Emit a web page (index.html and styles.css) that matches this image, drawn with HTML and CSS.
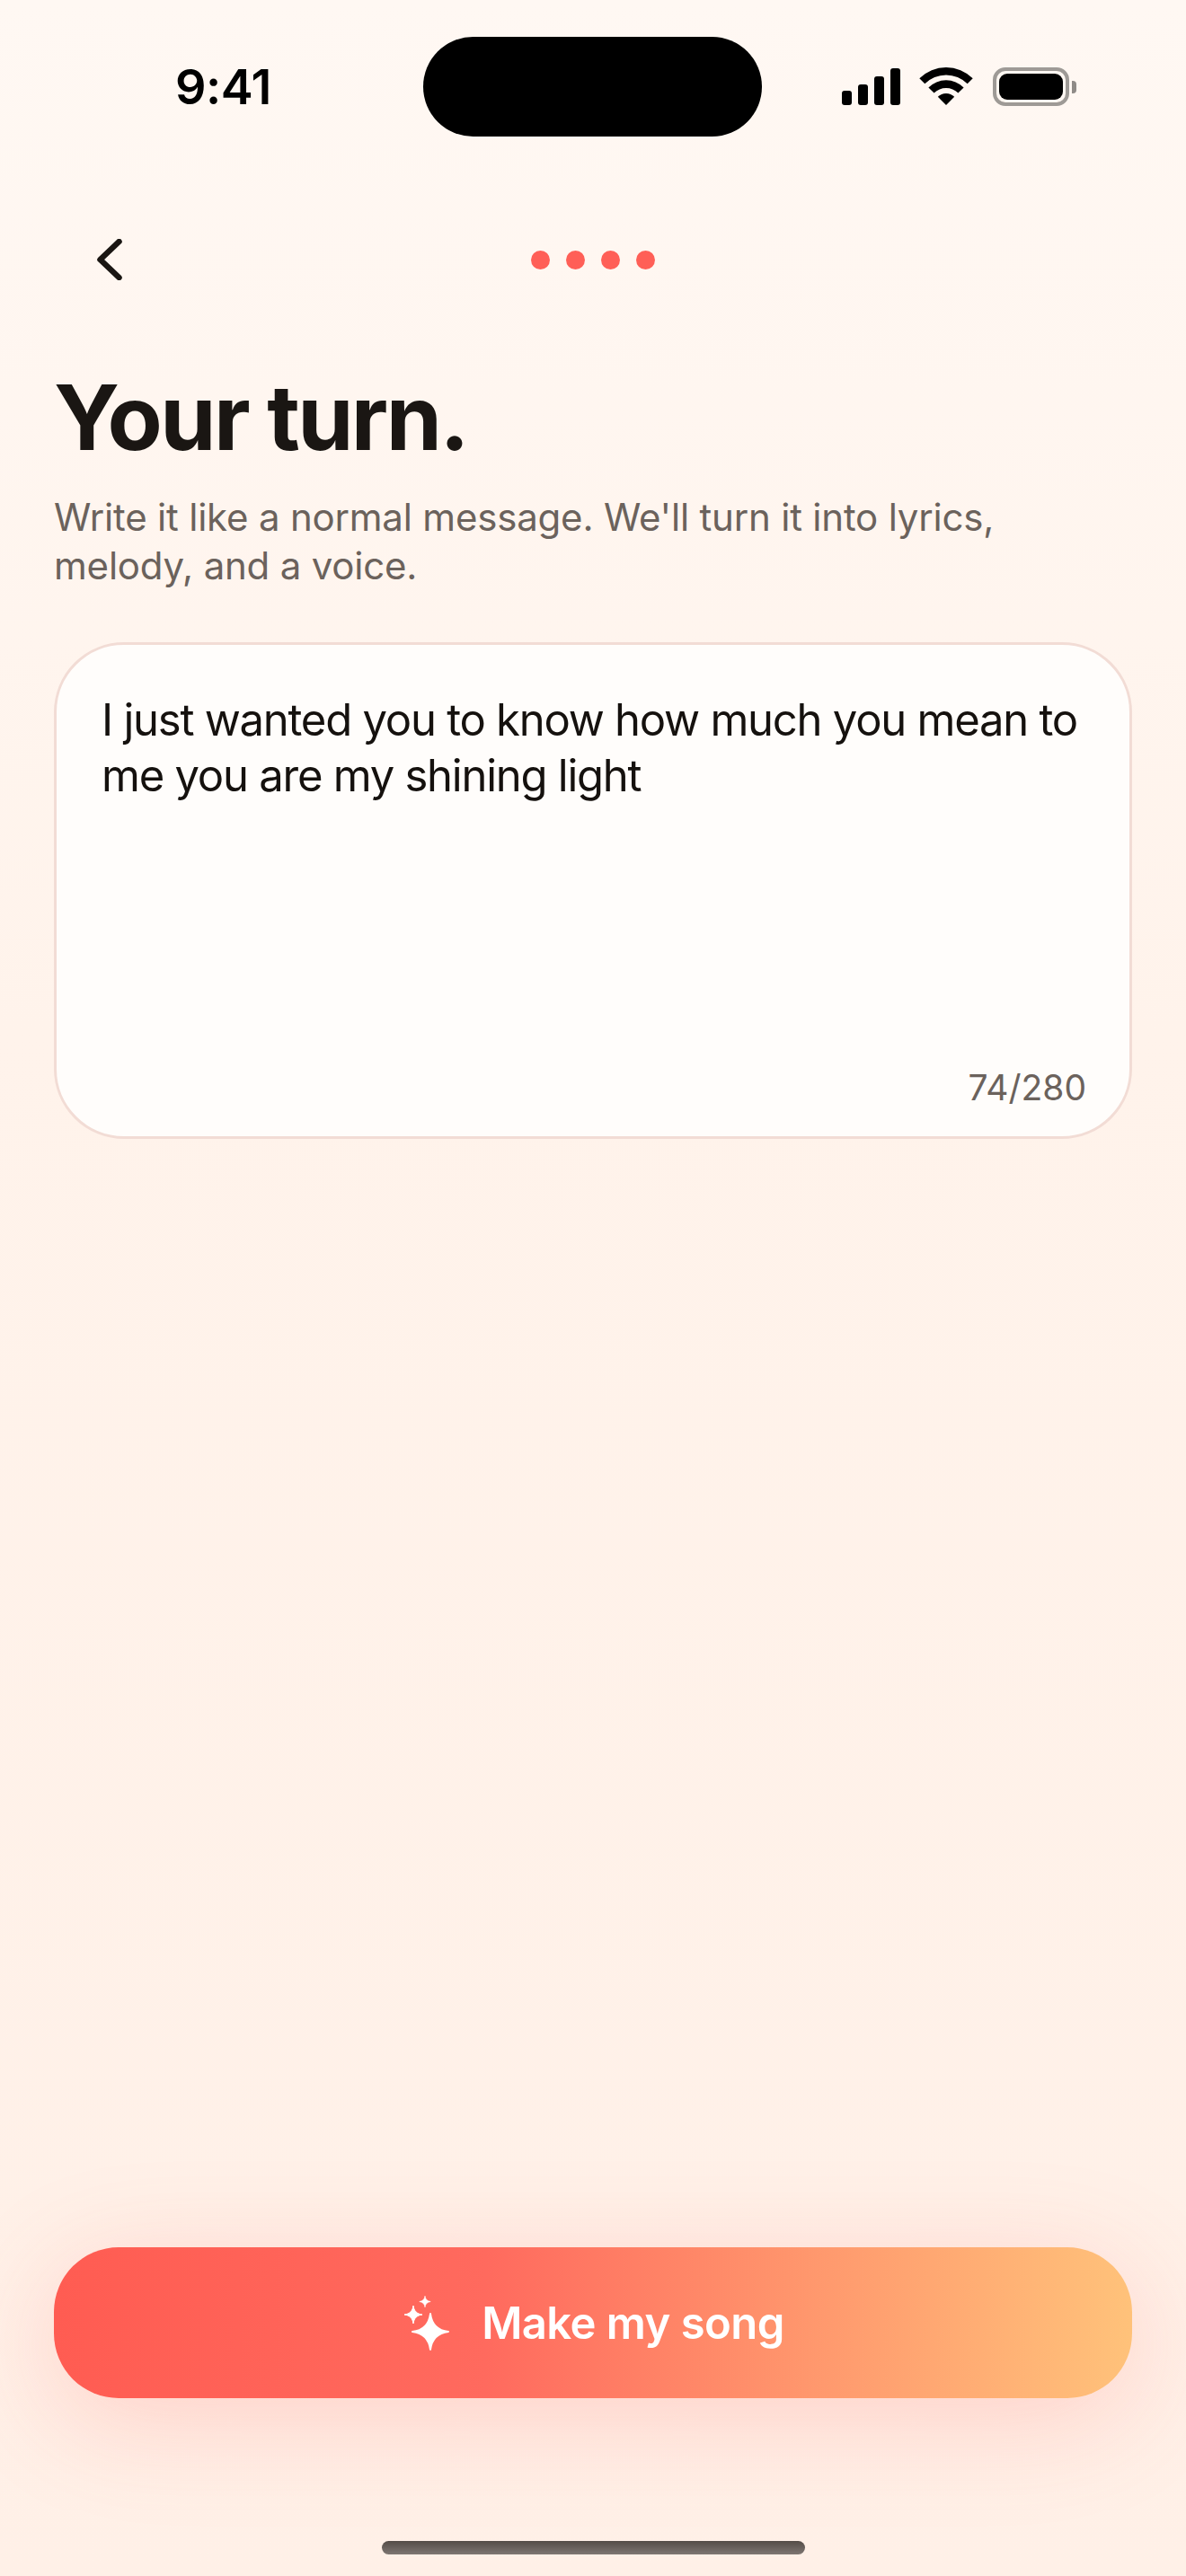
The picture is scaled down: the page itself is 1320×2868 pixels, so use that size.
FILE: index.html
```html
<!DOCTYPE html>
<html lang="en">
<head>
<meta charset="utf-8">
<title>Your turn</title>
<link rel="stylesheet" href="styles.css">
</head>
<body>
<main class="screen">
  <header class="status">
    <span class="time">9:41</span>
    <div class="island"></div>
    <div class="status-icons">
      <svg class="signal" width="65" height="41" viewBox="0 0 65 41"><rect x="0" y="25" width="11" height="16" rx="3"/><rect x="18" y="18" width="11" height="23" rx="3"/><rect x="36" y="9" width="11" height="32" rx="3"/><rect x="54" y="0" width="11" height="41" rx="3"/></svg>
      <svg class="wifi" width="58" height="42" viewBox="0 0 58 42"><path d="M-.7 12.300A42 42 0 0 1 58.700 12.300L52.700 18.300A33.500 33.500 0 0 0 5.300 18.300Z"/><path d="M9.400 22.400A27.700 27.700 0 0 1 48.600 22.400L42.400 28.600A19 19 0 0 0 15.600 28.600Z"/><path d="M19.800 32.800A13 13 0 0 1 38.200 32.800L29 42Z"/></svg>
      <div class="battery"><div class="battery-shell"><div class="battery-fill"></div></div><div class="battery-cap"></div></div>
    </div>
  </header>

  <nav class="topbar">
    <button class="back" aria-label="Back">
      <svg width="28" height="46" viewBox="0 0 28 46" fill="none"><path d="M24.500 3 3.500 23l21 20"/></svg>
    </button>
    <div class="steps"><i></i><i></i><i></i><i></i></div>
  </nav>

  <section class="intro">
    <h1>Your turn.</h1>
    <p>Write it like a normal message. We'll turn it into lyrics, melody, and a voice.</p>
  </section>

  <section class="card">
    <p class="message">I just wanted you to know how much you mean to me you are my shining light</p>
    <span class="count">74/280</span>
  </section>

  <div class="spacer"></div>

  <button class="cta">
    <svg width="50" height="61" viewBox="0 0 50 61"><path d="M0-20C1.500-8 8-1.500 20 0 8 1.500 1.500 8 0 20-1.500 8-8 1.500-20 0-8-1.500-1.500-8 0-20Z" transform="translate(29 40)"/><path d="M0-20C1.500-8 8-1.500 20 0 8 1.500 1.500 8 0 20-1.500 8-8 1.500-20 0-8-1.500-1.500-8 0-20Z" transform="translate(10 21) scale(.5)"/><path d="M0-20C1.500-8 8-1.500 20 0 8 1.500 1.500 8 0 20-1.500 8-8 1.500-20 0-8-1.500-1.500-8 0-20Z" transform="translate(23 6.500) scale(.31)"/></svg>
    <span>Make my song</span>
  </button>

  <div class="home"></div>
</main>
</body>
</html>
```

FILE: styles.css
```css
* { box-sizing: border-box; }
html, body { margin: 0; padding: 0; }
body { font-family: Inter, "Liberation Sans", sans-serif; background: #fff3ec; }
.screen {
  position: relative;
  width: 1320px;
  height: 2868px;
  display: flex;
  flex-direction: column;
  padding: 0 60px;
  overflow: hidden;
  background: linear-gradient(180deg, #fff8f3 0%, #fff3eb 40%, #fff0e7 100%);
}
.status {
  height: 194px;
  flex: none;
  margin: 0 -60px;
  position: relative;
  display: flex;
  justify-content: space-between;
  padding: 75px 122px 0 195px;
}
.time { font-size: 54px; font-weight: 600; line-height: 44px; color: #000; letter-spacing: -0.5px; }
.island {
  position: absolute;
  left: 471px;
  top: 41px;
  width: 377px;
  height: 111px;
  border-radius: 56px;
  background: #000;
}
.status-icons { display: flex; align-items: flex-start; gap: 23px; }
.signal { margin-top: 1px; margin-right: -1px; fill: #000; }
.wifi { fill: #000; overflow: visible; }
.battery { display: flex; align-items: center; gap: 3px; height: 43px; }
.battery-shell {
  width: 85px;
  height: 43px;
  border: 4px solid #9e9a96;
  border-radius: 14px;
  padding: 3px;
}
.battery-fill { width: 100%; height: 100%; background: #000; border-radius: 9px; }
.battery-cap { width: 5px; height: 14px; background: #8f8b87; border-radius: 0 4px 4px 0; }
.topbar {
  position: relative;
  flex: none;
  height: 60px;
  margin-top: 65px;
  display: flex;
  justify-content: center;
  align-items: center;
}
.back {
  position: absolute;
  left: 48px;
  top: 7px;
  padding: 0;
  border: 0;
  background: none;
  line-height: 0;
}
.back path { stroke: #1a1613; stroke-width: 6.5; stroke-linecap: round; stroke-linejoin: round; }
.steps { display: flex; gap: 18px; }
.steps i { width: 21px; height: 21px; border-radius: 50%; background: #ff5f57; }
.intro { flex: none; margin-top: 86px; }
h1 {
  margin: 0;
  font-size: 100px;
  line-height: 120px;
  font-weight: 700;
  letter-spacing: -2.6px;
  color: #1a1613;
}
.intro p {
  margin: 24px 0 0;
  width: 1130px;
  font-size: 42px;
  line-height: 54px;
  letter-spacing: -0.2px;
  color: #6b625c;
}
.card {
  position: relative;
  flex: none;
  margin-top: 58px;
  height: 553px;
  padding: 53px 48px 0 50px;
  background: #fffdfb;
  border: 3px solid #f2dcd5;
  border-radius: 78px;
}
.message { margin: 0; font-size: 49px; line-height: 62px; letter-spacing: -1.25px; color: #15110e; }
.count {
  position: absolute;
  right: 48px;
  bottom: 30px;
  font-size: 39px;
  line-height: 48px;
  color: #6b625c;
}
.spacer { flex: 1; }
.cta {
  flex: none;
  height: 168px;
  margin-bottom: 198px;
  border: 0;
  padding: 0 0 0 3px;
  border-radius: 72px;
  background: linear-gradient(90deg, #ff5c52 0%, #ff6a5e 40%, #ff9a6e 72%, #ffc27a 100%);
  box-shadow: 0 24px 120px rgba(255, 95, 87, 0.22);
  color: #fff;
  font-family: inherit;
  font-size: 49px;
  font-weight: 600;
  letter-spacing: -0.55px;
  display: flex;
  align-items: center;
  justify-content: center;
  gap: 36px;
}
.cta svg { fill: #fff; stroke: #fff; stroke-width: 2; stroke-linejoin: round; flex: none; overflow: visible; }
.home {
  position: absolute;
  left: 425px;
  top: 2829px;
  width: 471px;
  height: 15px;
  border-radius: 8px;
  background: linear-gradient(180deg, #544c47, #7e7672);
}
```
